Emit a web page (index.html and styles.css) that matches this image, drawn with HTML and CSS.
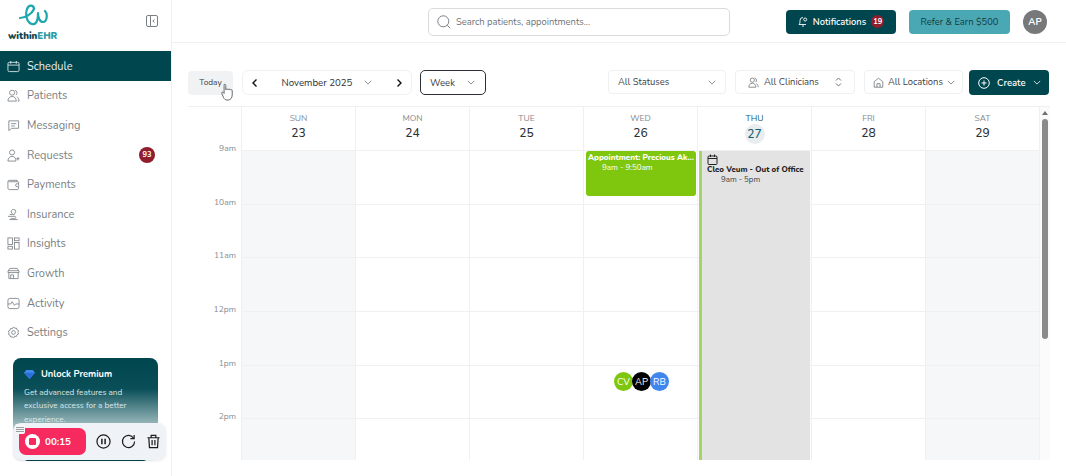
FILE: index.html
```html
<!DOCTYPE html>
<html lang="en">
<head>
<meta charset="utf-8">
<title>withinEHR Schedule</title>
<link rel="stylesheet" href="styles.css">
</head>
<body>
<div class="app">
  <aside class="sidebar">
    <div class="brand">
      <div class="logo">
        <svg class="logo-mark" width="40" height="26" viewBox="0 0 40 26" fill="none" stroke="#1ea6ad" stroke-width="2.200" stroke-linecap="round" stroke-linejoin="round"><path d="M1 14C6 14 13 10 15 5 15 1 10 0 8 5 6 11 8 19 13 20 17 21 19 17 19 9 19 14 21 18 24 18 28 18 29 10 26 7"/></svg>
        <div class="logo-text"><span class="logo-a">within</span><span class="logo-b">EHR</span></div>
      </div>
      <svg class="collapse" width="12" height="12" viewBox="0 0 12 12" fill="none" stroke="#7b8086"><rect x=".5" y=".5" width="11" height="11" rx="1.5"/><path d="M4.5 .5v11M8.5 4.5 6.8 6l1.7 1.500"/></svg>
    </div>
    <nav class="nav">
      <a class="nav-item active"><svg class="ni" viewBox="0 0 14 14" fill="none" stroke="currentColor"><rect x="1" y="2.500" width="12" height="10" rx="1.500"/><path d="M1 5.500h12M4 1v3M10 1v3"/></svg>Schedule</a>
      <a class="nav-item"><svg class="ni" viewBox="0 0 14 14" fill="none" stroke="currentColor"><circle cx="5.500" cy="4" r="2.700"/><path d="M1 13c0-3 2-5 4.500-5S10 10 10 13zM8.500 1.500a2.700 2.700 0 0 1 1 5M10.500 8.500c1.500.6 2.500 2.200 2.500 4.500h-1.500"/></svg>Patients</a>
      <a class="nav-item"><svg class="ni" viewBox="0 0 14 14" fill="none" stroke="currentColor"><path d="M2 2h10.500v8H5l-3 2.500zM4.500 5h5.500M4.500 7.500h4"/></svg>Messaging</a>
      <a class="nav-item"><svg class="ni" viewBox="0 0 14 14" fill="none" stroke="currentColor"><circle cx="5.500" cy="3.700" r="2.700"/><path d="M1 13c0-3 2-5 4.500-5S9 9.500 9.500 11v2zM10 10.500h3.500M11.800 8.700v3.600"/></svg>Requests<span class="nav-badge">93</span></a>
      <a class="nav-item"><svg class="ni" viewBox="0 0 14 14" fill="none" stroke="currentColor"><path d="M11 4V2.500H2.500A1.500 1.500 0 0 0 1 4v7a1.500 1.500 0 0 0 1.500 1.500H11a1.500 1.500 0 0 0 1.500-1.500V9M1.500 3.500 3 4h8.500a1 1 0 0 1 1 1v1.500"/><circle cx="11" cy="7.800" r="1.700"/></svg>Payments</a>
      <a class="nav-item"><svg class="ni" viewBox="0 0 14 14" fill="none" stroke="currentColor"><path d="M7 1.500a2.500 2.500 0 0 1 2.500 2.500L7.500 7.500 5 5.500A2.500 2.500 0 0 1 7 1.500zM1 9h7.500a1.300 1.300 0 0 1 0 2.500H4M3 7h3M2.500 12.500h9"/></svg>Insurance</a>
      <a class="nav-item"><svg class="ni" viewBox="0 0 14 14" fill="none" stroke="currentColor"><rect x="1" y="1" width="5" height="7"/><rect x="8" y="1" width="5" height="3"/><rect x="1" y="10" width="5" height="3"/><rect x="8" y="6" width="5" height="7"/></svg>Insights</a>
      <a class="nav-item"><svg class="ni" viewBox="0 0 14 14" fill="none" stroke="currentColor"><path d="M3 1.500h8l2 3.500v1H1V5zM2 6v6.500h10V6M4 12.500V8.500h3v4M1 4h12"/></svg>Growth</a>
      <a class="nav-item"><svg class="ni" viewBox="0 0 14 14" fill="none" stroke="currentColor"><rect x="1" y="1.500" width="12" height="11" rx="2"/><path d="M1 7.500h3l1.500-2.500 2.500 4 1.300-1.500H13"/></svg>Activity</a>
      <a class="nav-item"><svg class="ni" viewBox="0 0 14 14" fill="none" stroke="currentColor"><path d="M7 1l1.200 1.400 1.900-.2.600 1.800 1.700.9-.6 1.800.6 1.900-1.700.9-.6 1.800-1.900-.2L7 13l-1.200-1.400-1.900.2-.6-1.800-1.700-.9.6-1.900-.6-1.800 1.700-.9.6-1.800 1.900.2z"/><circle cx="7" cy="7" r="2"/></svg>Settings</a>
    </nav>
    <div class="promo">
      <div class="promo-head"><svg width="11" height="10" viewBox="0 0 12 11"><path d="M2.500 1h7L12 4 6 11 0 4z" fill="#3f8cf0"/><path d="M0 4h12L6 11z" fill="#2a6fd8"/></svg>Unlock Premium</div>
      <p class="promo-text">Get advanced features and exclusive access for a better experience.</p>
      <div class="promo-btn"></div>
    </div>
    <div class="recorder">
      <span class="rec-handle"><i></i><i></i><i></i></span>
      <div class="rec-pill"><span class="rec-stop"><i></i></span>00:15</div>
      <svg class="rec-icon" viewBox="0 0 16 16" fill="none" stroke="#1c1c1c" stroke-width="1.300"><circle cx="8" cy="8" r="7"/><path d="M6.300 5v6M9.700 5v6" stroke-width="1.600"/></svg>
      <svg class="rec-icon" viewBox="0 0 16 16" fill="none" stroke="#1c1c1c" stroke-width="1.300"><path d="M13.500 4.500A6.500 6.500 0 1 0 14.500 8"/><path d="M14 1v4h-4"/></svg>
      <svg class="rec-icon" viewBox="0 0 16 16" fill="none" stroke="#1c1c1c" stroke-width="1.300"><path d="M1.500 4h13M5.500 4V1.500h5V4M3 4l.7 10.500h8.600L13 4M6.500 6.500v5.500M9.500 6.500v5.500"/></svg>
    </div>
  </aside>
  <main class="main">
    <header class="topbar">
      <label class="search"><svg width="14" height="14" viewBox="0 0 14 14" fill="none" stroke="#7b8086"><circle cx="6.300" cy="6.300" r="5.500"/><path d="m10.300 10.300 3 3"/></svg><span>Search patients, appointments...</span></label>
      <div class="top-actions">
        <button class="btn-notify"><svg width="10" height="11" viewBox="0 0 10 11" fill="none" stroke="#fff" stroke-width=".9"><path d="M1 8.500c1-1 1-2 1-4a3 3 0 0 1 3-3M1 8.500h7M4 10h2"/><circle cx="7.200" cy="3.500" r="1.500"/></svg>Notifications<span class="notify-badge">19</span></button>
        <button class="btn-refer">Refer &amp; Earn $500</button>
        <span class="avatar">AP</span>
      </div>
    </header>
    <section class="toolbar">
      <button class="today">Today</button>
      <div class="month-nav">
        <svg class="arrow" viewBox="0 0 8 10" fill="none" stroke="#111" stroke-width="1.400"><path d="M5.500 1.500 2 5l3.500 3.500"/></svg>
        <span class="month">November 2025<svg class="chev" viewBox="0 0 10 6" fill="none" stroke="#6f7479"><path d="m1 1 4 4 4-4"/></svg></span>
        <svg class="arrow" viewBox="0 0 8 10" fill="none" stroke="#111" stroke-width="1.400"><path d="M2.500 1.500 6 5 2.500 8.500"/></svg>
      </div>
      <button class="week">Week<svg class="chev" viewBox="0 0 10 6" fill="none" stroke="#6f7479"><path d="m1 1 4 4 4-4"/></svg></button>
      <div class="filters">
        <div class="filter f-status"><span>All Statuses</span><svg class="chev" viewBox="0 0 10 6" fill="none" stroke="#6f7479"><path d="m1 1 4 4 4-4"/></svg></div>
        <div class="filter f-clin"><svg class="fi" viewBox="0 0 14 14" fill="none" stroke="#6f7479"><circle cx="5.500" cy="4" r="2.700"/><path d="M1 13c0-3 2-5 4.500-5S10 10 10 13zM8.500 1.500a2.700 2.700 0 0 1 1 5M10.500 8.500c1.500.6 2.500 2.200 2.500 4.500"/></svg><span>All Clinicians</span><svg class="updown" width="7" height="10" viewBox="0 0 7 10" fill="none" stroke="#6f7479"><path d="m1 3.500 2.500-2.500L6 3.500M1 6.500 3.500 9 6 6.500"/></svg></div>
        <div class="filter f-loc"><svg class="fi" viewBox="0 0 14 14" fill="none" stroke="#6f7479"><path d="M1.500 6 7 1.500 12.500 6v7h-11zM5 13V8.500h4V13"/></svg><span>All Locations</span><svg class="chev" viewBox="0 0 10 6" fill="none" stroke="#6f7479"><path d="m1 1 4 4 4-4"/></svg></div>
        <button class="create"><svg width="12" height="12" viewBox="0 0 12 12" fill="none" stroke="#fff"><circle cx="6" cy="6" r="5.300"/><path d="M6 3.500v5M3.500 6h5"/></svg>Create<svg class="chev" viewBox="0 0 10 6" fill="none" stroke="#fff"><path d="m1 1 4 4 4-4"/></svg></button>
      </div>
    </section>
    <section class="calendar">
      <div class="times">
        <div class="head"></div>
        <div class="hour"><span>9am</span></div>
        <div class="hour"><span>10am</span></div>
        <div class="hour"><span>11am</span></div>
        <div class="hour"><span>12pm</span></div>
        <div class="hour"><span>1pm</span></div>
        <div class="hour"><span>2pm</span></div>
      </div>
      <div class="day off">
        <div class="head"><small>SUN</small><b>23</b></div>
        <div class="cells"><i></i><i></i><i></i><i></i><i></i><i></i></div>
      </div>
      <div class="day">
        <div class="head"><small>MON</small><b>24</b></div>
        <div class="cells"><i></i><i></i><i></i><i></i><i></i><i></i></div>
      </div>
      <div class="day">
        <div class="head"><small>TUE</small><b>25</b></div>
        <div class="cells"><i></i><i></i><i></i><i></i><i></i><i></i></div>
      </div>
      <div class="day">
        <div class="head"><small>WED</small><b>26</b></div>
        <div class="cells"><i></i><i></i><i></i><i></i><i></i><i></i>
          <div class="appt"><strong>Appointment: Precious Ak...</strong><span>9am - 9:50am</span></div>
          <div class="people"><span class="p-cv">CV</span><span class="p-ap">AP</span><span class="p-rb">RB</span></div>
        </div>
      </div>
      <div class="day today-col">
        <div class="head"><small>THU</small><b>27</b></div>
        <div class="cells"><i></i><i></i><i></i><i></i><i></i><i></i>
          <div class="ooo"><svg width="11" height="11" viewBox="0 0 11 11" fill="none" stroke="#222"><rect x="1" y="2" width="9" height="8.500" rx="1"/><path d="M1 4.500h9M3.500 .5v2.500M7.500 .5v2.500"/></svg><strong>Cleo Veum - Out of Office</strong><span>9am - 5pm</span></div>
        </div>
      </div>
      <div class="day">
        <div class="head"><small>FRI</small><b>28</b></div>
        <div class="cells"><i></i><i></i><i></i><i></i><i></i><i></i></div>
      </div>
      <div class="day off">
        <div class="head"><small>SAT</small><b>29</b></div>
        <div class="cells"><i></i><i></i><i></i><i></i><i></i><i></i></div>
      </div>
      <div class="scrollbar"><em class="up"></em><span class="thumb"></span><em class="down"></em></div>
    </section>
    <svg class="cursor" width="14" height="18" viewBox="0 0 14 18" fill="#fff" stroke="#55595e" stroke-width=".9"><path d="M3 1.500c1-.6 1.800 0 1.800 1v4.300c.2-1 2-1 2.200 0 .2-1 2-1 2.200.2.400-.7 2-.5 2 .6v4.400c0 2.500-1.500 5-4 5H6c-1.800 0-2.700-1-3.500-2.500L.8 10.500c-.5-1 .7-2 1.500-1l.8 1V2.500z"/></svg>
  </main>
</div>
</body>
</html>
```
FILE: styles.css
```css
* { box-sizing: border-box; }
html, body { margin: 0; height: 476px; overflow: hidden; background: #fff; }
body { font-family: "Nunito", "Lato", "Noto Sans", sans-serif; color: #3c4146; }
button { font-family: inherit; border: 0; padding: 0; }

.app { display: flex; width: 1066px; height: 476px; position: relative; }

/* Sidebar */
.sidebar { position: relative; width: 172px; flex: none; border-right: 1px solid #eef0f2; }
.brand { height: 51px; display: flex; align-items: flex-start; justify-content: space-between; padding: 4px 13px 0 8px; }
.logo { display: flex; flex-direction: column; }
.logo-mark { margin-left: 11px; }
.logo-text { font-size: 9.500px; font-weight: 900; line-height: 11px; margin-top: 0; }
.logo-a { color: #10444c; }
.logo-b { color: #2d9aa6; }
.collapse { margin-top: 11px; }
.nav { display: flex; flex-direction: column; }
.nav-item { height: 29.600px; display: flex; align-items: center; gap: 7px; padding-left: 7px; padding-top: 1px; font-size: 11px; color: #7a7f84; position: relative; }
.nav-item.active { background: #00464f; color: #e8f0f1; }
.ni { width: 13px; height: 13px; flex: none; stroke-width: .9; }
.nav-badge { position: absolute; right: 16px; top: 7px; width: 16px; height: 16px; border-radius: 50%; background: #8f1d2c; color: #fff; font-size: 7.500px; font-weight: 700; display: flex; align-items: center; justify-content: center; }

.promo { margin: 11px 13px 0; width: 145px; height: 103px; border-radius: 8px; padding: 10px 11px; background: linear-gradient(#00464f 0, #0a4f58 30%, #8fb0b4 62%, #f2f5f6 80%); color: #fff; position: relative; }
.promo-head { display: flex; align-items: center; gap: 6px; font-size: 9.300px; font-weight: 700; }
.promo-text { margin: 6px 0 0; font-size: 8.200px; line-height: 13.500px; color: #dbe7e8; }
.promo-btn { position: absolute; left: 11px; right: 11px; bottom: 0; height: 5px; background: #00464f; border-radius: 0 0 4px 4px; }

.recorder { position: absolute; left: 13px; top: 423px; width: 153px; height: 37px; background: #eff2f7; border-radius: 8px; display: flex; align-items: center; padding-left: 6px; box-shadow: 0 1px 3px rgba(0,0,0,.08); }
.rec-handle { position: absolute; left: 2px; top: 1px; width: 10px; height: 10px; border-radius: 2px; background: #f5f6f8; display: flex; flex-direction: column; justify-content: center; gap: 1px; padding: 0 1px; }
.rec-handle i { display: block; height: 1px; background: #9a9ea3; }
.rec-pill { width: 67px; height: 27px; flex: none; border-radius: 7px; background: #f72a5f; color: #fff; font-size: 9.800px; font-weight: 700; display: flex; align-items: center; gap: 5px; padding-left: 6px; margin-right: 10px; }
.rec-stop { width: 15px; height: 15px; border-radius: 50%; background: #fff; display: flex; align-items: center; justify-content: center; }
.rec-stop i { width: 7px; height: 7px; background: #f72a5f; border-radius: 1px; }
.rec-icon { width: 15px; height: 15px; margin-right: 10px; flex: none; }

/* Main */
.main { flex: 1; min-width: 0; position: relative; }
.topbar { height: 43px; border-bottom: 1px solid #eef0f2; display: flex; align-items: flex-start; padding: 8px 19px 0 256px; }
.search { width: 302px; height: 28px; border: 1px solid #d9dcdf; border-radius: 5px; display: flex; align-items: center; gap: 5px; padding-left: 8px; font-size: 9.400px; color: #6f7479; }
.top-actions { margin-left: auto; display: flex; align-items: center; height: 25px; margin-top: 1px; }
.btn-notify { width: 110px; height: 24px; background: #00464f; color: #fff; border-radius: 4px; display: flex; align-items: center; justify-content: center; gap: 5px; font-size: 9.300px; font-weight: 600; margin-right: 13px; }
.notify-badge { width: 13px; height: 13px; border-radius: 50%; background: #8f1d2c; font-size: 7.500px; font-weight: 700; display: flex; align-items: center; justify-content: center; }
.btn-refer { width: 101px; height: 24px; background: #4aa8b5; color: #133a40; border-radius: 4px; font-size: 9.400px; margin-right: 13px; }
.avatar { width: 24px; height: 24px; border-radius: 50%; background: #77787a; color: #fff; font-size: 9.500px; font-weight: 700; display: flex; align-items: center; justify-content: center; }

.toolbar { height: 63px; padding: 27px 17px 0 16px; display: flex; align-items: flex-start; }
.today { width: 45px; height: 24px; margin-top: 1px; padding-bottom: 1px; background: #f1f2f4; border-radius: 4px; font-size: 8.300px; color: #3c4146; margin-right: 9px; }
.month-nav { width: 170px; height: 25px; border: 1px solid #eef0f2; border-radius: 6px; display: flex; align-items: center; justify-content: space-between; padding: 0 8px; margin-right: 8px; }
.arrow { width: 8px; height: 10px; }
.month { font-size: 9.700px; color: #2c3035; display: flex; align-items: center; gap: 12px; }
.chev { width: 8px; height: 5px; flex: none; }
.week { width: 66px; height: 25px; border: 1px solid #2c3035; border-radius: 5px; background: #fff; font-size: 9.600px; color: #3c4146; display: flex; align-items: center; justify-content: space-between; padding: 0 10px 0 9px; }
.filters { margin-left: auto; display: flex; align-items: flex-start; }
.filter { height: 24px; margin-top: 0; border: 1px solid #eef0f2; border-radius: 4px; display: flex; align-items: center; font-size: 9.400px; color: #3c4146; white-space: nowrap; }
.f-status { width: 118px; padding: 0 9px; justify-content: space-between; margin-right: 9px; }
.f-clin { width: 120px; padding: 0 12px; gap: 5px; margin-right: 9px; }
.f-clin .updown { margin-left: auto; }
.f-loc { width: 99px; padding: 0 8px; gap: 4px; margin-right: 6px; justify-content: space-between; }
.fi { width: 11px; height: 11px; flex: none; }
.create { width: 80px; height: 25px; background: #00464f; color: #fff; border-radius: 4px; font-size: 9.500px; font-weight: 600; display: flex; align-items: center; gap: 7px; padding-left: 9px; }

/* Calendar */
.calendar { margin-left: 16px; width: 862px; height: 354px; overflow: hidden; border-top: 1px solid #eef0f2; display: grid; grid-template-columns: 53px repeat(7, 1fr) 11px; }
.head { height: 43px; display: flex; flex-direction: column; align-items: center; padding-top: 5px; }
.head small { font-size: 8.500px; color: #858a8f; line-height: 12px; }
.head b { font-size: 12px; font-weight: 500; color: #2c3035; line-height: 17px; margin-top: 1px; }
.times { position: relative; }
.hour { display: flow-root; height: 53.700px; text-align: right; padding-right: 5px; font-size: 8.500px; color: #858a8f; }
.hour span { display: block; margin-top: -8px; }
.day { border-left: 1px solid #eef0f2; }
.cells { position: relative; }
.cells i { display: block; height: 53.700px; border-top: 1px solid #eef0f2; }
.day.off .cells { background: #f6f7f9; }
.today-col .head small { color: #14606b; }
.today-col .head b { color: #14606b; width: 20px; height: 20px; border-radius: 50%; background: #e9edf0; display: flex; align-items: center; justify-content: center; margin-top: 0; }

.appt { position: absolute; left: 2px; right: 1px; top: 1px; height: 45px; background: #7fc70f; border-radius: 3px; color: #fff; font-size: 8px; line-height: 10px; padding: 2px 2px; overflow: hidden; }
.appt strong, .ooo strong { display: block; white-space: nowrap; font-weight: 800; }
.appt span { display: block; padding-left: 14px; }
.ooo { position: absolute; left: 1px; right: 1px; top: 1px; height: 309px; background: #e3e3e3; border-left: 3px solid #a4d36a; padding: 3px 5px; font-size: 7.900px; line-height: 10px; color: #222; }
.ooo svg { display: block; }
.ooo span { display: block; padding-left: 14px; color: #3c4146; }
.people { position: absolute; left: 30px; top: 222px; display: flex; }
.people span { width: 19px; height: 19px; border-radius: 50%; color: #fff; font-size: 9.500px; display: flex; align-items: center; justify-content: center; margin-right: -1px; }
.p-cv { background: #7fc70f; }
.p-ap { background: #000; }
.p-rb { background: #3f86ee; }

.scrollbar { border-left: 1px solid #eef0f2; background: #fbfbfc; position: relative; }
.thumb { position: absolute; left: 2px; top: 12px; width: 6px; height: 220px; border-radius: 3px; background: #8a8a8a; }
.scrollbar em { position: absolute; left: 2px; width: 0; height: 0; border-left: 3px solid transparent; border-right: 3px solid transparent; }
.scrollbar .up { top: 4px; border-bottom: 4px solid #6f6f6f; }
.scrollbar .down { bottom: 6px; border-top: 4px solid #6f6f6f; }

.cursor { position: absolute; left: 49px; top: 83px; }
```
